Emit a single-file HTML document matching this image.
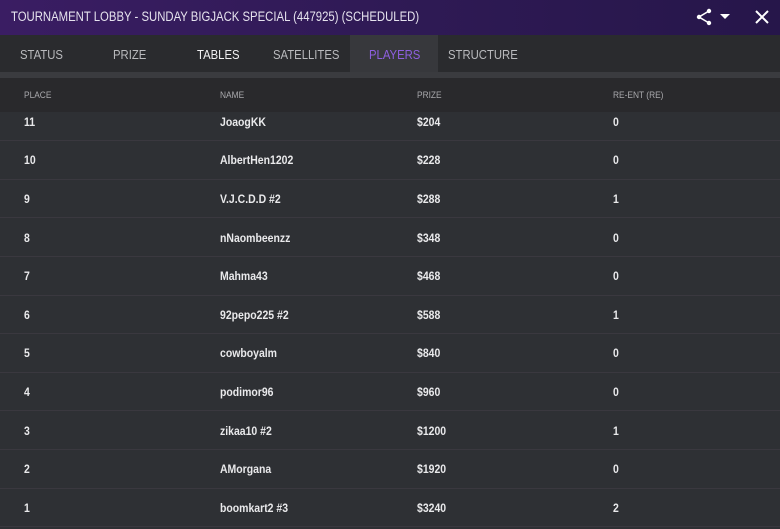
<html><head><style>
body{margin:0;width:780px;height:529px;overflow:hidden;background:#2e3034;font-family:"Liberation Sans",Arial,sans-serif;}
.sx{display:inline-block;transform-origin:0 50%;white-space:nowrap;}
.hd{position:absolute;left:0;top:0;width:780px;height:35px;background:linear-gradient(90deg,#3a1d63,#2f1a55 50%,#26164a);}
.hd .t{position:absolute;left:11px;top:9px;color:#e6e3ee;font-size:13.5px;transform:scaleX(0.84);transform-origin:0 50%;white-space:nowrap;}
.tabs{position:absolute;left:0;top:35px;width:780px;height:37px;background:#2a2b2e;}
.tab{position:absolute;top:47px;font-size:13px;color:#b9babd;transform:scaleX(0.87);transform-origin:0 50%;white-space:nowrap;}
.act{position:absolute;left:350px;top:35px;width:88px;height:37px;background:#37383c;}
.gap{position:absolute;left:0;top:72px;width:780px;height:6px;background:#3a3b3f;}
.ch{position:absolute;left:0;top:78px;width:780px;height:34px;background:#29292c;}
.ch span{position:absolute;top:12px;font-size:9.5px;color:#a9a9ad;transform:scaleX(0.88);transform-origin:0 50%;white-space:nowrap;}
.rows{position:absolute;left:0;top:112px;width:780px;height:417px;overflow:hidden;}
.r{position:absolute;left:0;width:780px;height:38.6px;border-bottom:1px solid #3a383f;box-sizing:border-box;}
.r span{position:absolute;top:14px;font-size:11.5px;color:#e9e9eb;font-weight:bold;transform:scaleX(0.91);transform-origin:0 50%;white-space:nowrap;}
</style></head><body>
<div class="hd"><div class="t">TOURNAMENT LOBBY - SUNDAY BIGJACK SPECIAL (447925) (SCHEDULED)</div>
<svg style="position:absolute;left:696px;top:8px" width="40" height="18" viewBox="0 0 40 18"><circle cx="13" cy="3" r="2.2" fill="#fff"/><circle cx="13" cy="15" r="2.2" fill="#fff"/><circle cx="3" cy="9" r="2.2" fill="#fff"/><path d="M13 3L3 9L13 15" stroke="#fff" stroke-width="1.6" fill="none"/><path d="M24 6h10l-5 5z" fill="#fff"/></svg>
<svg style="position:absolute;left:755px;top:10px" width="14" height="14" viewBox="0 0 14 14"><path d="M1 1L13 13M13 1L1 13" stroke="#fff" stroke-width="2"/></svg>
</div>
<div class="tabs"></div><div class="act"></div>
<div class="tab" style="left:20px">STATUS</div>
<div class="tab" style="left:113px">PRIZE</div>
<div class="tab" style="left:197px;color:#f0f0f2">TABLES</div>
<div class="tab" style="left:273px">SATELLITES</div>
<div class="tab" style="left:369px;color:#8e5fe0">PLAYERS</div>
<div class="tab" style="left:448px">STRUCTURE</div>
<div class="gap"></div>
<div class="ch"><span style="left:24px">PLACE</span><span style="left:220px">NAME</span><span style="left:417px">PRIZE</span><span style="left:613px">RE-ENT (RE)</span></div>
<div class="rows">
<div class="r" style="top:-9.3px"><span style="left:24px">11</span><span style="left:220px">JoaogKK</span><span style="left:417px">$204</span><span style="left:613px">0</span></div>
<div class="r" style="top:29.3px"><span style="left:24px">10</span><span style="left:220px">AlbertHen1202</span><span style="left:417px">$228</span><span style="left:613px">0</span></div>
<div class="r" style="top:67.9px"><span style="left:24px">9</span><span style="left:220px">V.J.C.D.D #2</span><span style="left:417px">$288</span><span style="left:613px">1</span></div>
<div class="r" style="top:106.5px"><span style="left:24px">8</span><span style="left:220px">nNaombeenzz</span><span style="left:417px">$348</span><span style="left:613px">0</span></div>
<div class="r" style="top:145.1px"><span style="left:24px">7</span><span style="left:220px">Mahma43</span><span style="left:417px">$468</span><span style="left:613px">0</span></div>
<div class="r" style="top:183.7px"><span style="left:24px">6</span><span style="left:220px">92pepo225 #2</span><span style="left:417px">$588</span><span style="left:613px">1</span></div>
<div class="r" style="top:222.3px"><span style="left:24px">5</span><span style="left:220px">cowboyalm</span><span style="left:417px">$840</span><span style="left:613px">0</span></div>
<div class="r" style="top:260.9px"><span style="left:24px">4</span><span style="left:220px">podimor96</span><span style="left:417px">$960</span><span style="left:613px">0</span></div>
<div class="r" style="top:299.5px"><span style="left:24px">3</span><span style="left:220px">zikaa10 #2</span><span style="left:417px">$1200</span><span style="left:613px">1</span></div>
<div class="r" style="top:338.1px"><span style="left:24px">2</span><span style="left:220px">AMorgana</span><span style="left:417px">$1920</span><span style="left:613px">0</span></div>
<div class="r" style="top:376.7px"><span style="left:24px">1</span><span style="left:220px">boomkart2 #3</span><span style="left:417px">$3240</span><span style="left:613px">2</span></div>
</div>
</body></html>
